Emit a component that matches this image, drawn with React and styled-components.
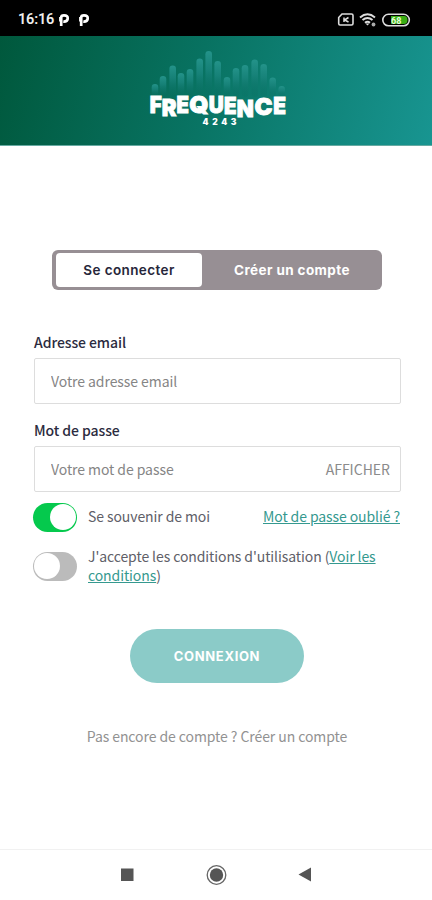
import { useState } from "react";
import styled, { createGlobalStyle } from "styled-components";

const BARS = [
    [155, 84], [163, 76], [172.7, 65.5], [181, 73], [190, 69],
    [199.7, 58.5], [208.7, 51], [217.7, 61], [227, 77], [236, 68],
    [245, 65], [254.7, 59.5], [263.7, 64], [272.7, 77.5], [281.7, 86],
];

// letter, left, baseline, width
const LETTERS = [
    ["F", 149.7, 113, 12], ["R", 161.7, 115.5, 14.7], ["E", 176.4, 112.5, 12.4],
    ["Q", 189.3, 112.5, 19.2], ["U", 208.7, 112.5, 15], ["E", 224, 113.5, 12.5],
    ["N", 236.8, 117.2, 17], ["C", 254.5, 114.5, 18], ["E", 273.3, 113.5, 12.7],
];

function Logo () {
    return (
        <svg width="144" height="80" viewBox="146 48 144 80" role="img" aria-label="Frequence 4243">
            <defs>
                <linearGradient id="bar" x1="0" y1="0" x2="0" y2="1">
                    <stop offset="0" stopColor="#24938a" />
                    <stop offset=".4" stopColor="#1a857d" stopOpacity=".8" />
                    <stop offset="1" stopColor="#066a5d" stopOpacity=".15" />
                </linearGradient>
            </defs>
            {BARS.map(([x, y]) => (
                <rect key={x} x={x - 3.3} y={y} width="6.6" height={97 - y} rx="3.3" fill="url(#bar)" />
            ))}
            <g fill="#fff" stroke="#fff" strokeWidth=".9" fontFamily="Inter, sans-serif" fontWeight="900" fontSize="23.5">
                {LETTERS.map(([letter, x, y, width]) => (
                    <text key={x} x={x} y={y} textLength={width} lengthAdjust="spacingAndGlyphs">{letter}</text>
                ))}
            </g>
            <text x="202.5" y="125" fill="#fff" fontFamily="Inter, sans-serif" fontWeight="900" fontSize="8.5" textLength="34">4243</text>
        </svg>
    )
}

function Parking () {
    return (
        <svg width="12" height="14" viewBox="0 0 12 14" fill="none" stroke="#fff">
            <path d="M3.2 13V4.500Q3.200 2.400 6 2.400C8.800 2.400 10 3.800 9.700 5.700C9.400 7.700 7.600 8.800 5.300 8.600" strokeWidth="2.7" />
            <path d="M1.700 8.500V4" strokeWidth="1.2" />
        </svg>
    )
}

function StatusIcons () {
    return (
        <svg width="74" height="16" viewBox="337 11.500 74 16" fill="none">
            <path d="M342 13.500H351.500Q353 13.500 353 15V23Q353 24.500 351.500 24.500H340Q338.700 24.500 338.700 23V17Z" stroke="#ddd" strokeWidth="1.6" />
            <path d="M344 17V21.500M348.500 17L344.500 19.500L348.500 21.500" stroke="#ddd" strokeWidth="1.5" />
            <path d="M360 16.900Q367.500 10.700 375 16.900M362.500 19.600Q367.500 15.400 372.500 19.600M365 22.200Q367.500 20.200 370 22.200" stroke="#ddd" strokeWidth="2" />
            <path d="M365.500 23L367.500 25L369.500 23Z" fill="#ddd" />
            <circle cx="373.500" cy="24" r="1.900" fill="#aaa" />
            <rect x="382.800" y="13.800" width="26.500" height="11.500" rx="5.700" stroke="#ddd" strokeWidth="1.600" />
            <path d="M391 15.500H404Q407.500 15.500 407.500 19.500T404 23.500H391Z" fill="#39ac13" />
            <text x="391" y="23" fill="#e4ffd9" fontFamily="Roboto, sans-serif" fontWeight="700" fontSize="9">68</text>
        </svg>
    )
}

export default function App () {
    const [remember, setRemember] = useState(true)
    const [accepted, setAccepted] = useState(false)
    const [visible, setVisible] = useState(false)

    return (
        <>
            <GlobalStyle />
            <Screen>
                <StatusBar>
                    <Clock>16:16</Clock>
                    <Notifications>
                        <Parking />
                        <Parking />
                    </Notifications>
                    <StatusIcons />
                </StatusBar>
                <Header>
                    <Logo />
                </Header>
                <Form onSubmit={(event) => event.preventDefault()}>
                    <Tabs>
                        <Tab type="button" $active>Se connecter</Tab>
                        <Tab type="button">Créer un compte</Tab>
                    </Tabs>
                    <Field>
                        <Label htmlFor="email">Adresse email</Label>
                        <InputBox>
                            <Input id="email" type="email" placeholder="Votre adresse email" />
                        </InputBox>
                    </Field>
                    <Field>
                        <Label htmlFor="password">Mot de passe</Label>
                        <InputBox>
                            <Input id="password" type={visible ? "text" : "password"} placeholder="Votre mot de passe" />
                            <ShowButton type="button" onClick={() => setVisible(!visible)}>AFFICHER</ShowButton>
                        </InputBox>
                    </Field>
                    <Option>
                        <Switch type="button" role="switch" aria-checked={remember} $on={remember} onClick={() => setRemember(!remember)}><Knob /></Switch>
                        <OptionText>Se souvenir de moi</OptionText>
                        <ForgotLink href="#">Mot de passe oublié ?</ForgotLink>
                    </Option>
                    <Option>
                        <Switch type="button" role="switch" aria-checked={accepted} $on={accepted} onClick={() => setAccepted(!accepted)}><Knob /></Switch>
                        <OptionText>J'accepte les conditions d'utilisation (<Link href="#">Voir les<br />conditions</Link>)</OptionText>
                    </Option>
                    <Submit type="submit">CONNEXION</Submit>
                    <Footer>Pas encore de compte ? Créer un compte</Footer>
                </Form>
                <NavBar>
                    <svg width="14" height="14"><rect x="1" y="0.500" width="12.500" height="12.500" fill="#555" /></svg>
                    <svg width="22" height="22">
                        <circle cx="11.500" cy="11" r="9.300" fill="none" stroke="#666" strokeWidth="1.300" />
                        <circle cx="11.500" cy="11" r="6.700" fill="#555" />
                    </svg>
                    <svg width="14" height="16"><path d="M0.500 7.500L13 0.500V14.500Z" fill="#555" /></svg>
                </NavBar>
            </Screen>
        </>
    )
}



// STYLING
const GlobalStyle = createGlobalStyle`
    * {
        box-sizing: border-box;
    }

    body {
        margin: 0;
        background-color: #fff;
        font-family: "Noto Sans CJK SC", "Noto Sans", sans-serif;
        font-size: 14px;
    }

    button, input {
        margin: 0;
        padding: 0;
        border: none;
        background: none;
        font: inherit;
    }
`;

const Screen = styled.div`
    display: flex;
    flex-direction: column;
    width: 432px;
    height: 900px;
    overflow: hidden;
`;

const StatusBar = styled.div`
    display: flex;
    align-items: center;
    flex: none;
    height: 36px;
    padding: 3px 21px 0 18px;
    background-color: #000;
`;

const Clock = styled.span`
    width: 36px;
    color: #eee;
    font-family: Roboto, sans-serif;
    font-size: 14.5px;
    font-weight: 600;
    letter-spacing: -.2px;
    line-height: 20px;
`;

const Notifications = styled.div`
    display: flex;
    flex: 1;
    gap: 8px;
    padding-left: 4px;
`;

const Header = styled.header`
    display: flex;
    justify-content: center;
    flex: none;
    height: 110px;
    padding: 12px 0 0 4px;
    background: linear-gradient(105deg, #00583c 0%, #087261 45%, #189591 100%);
    border-bottom: 1px solid #66aaa2;
`;

const Form = styled.form`
    display: flex;
    flex-direction: column;
    flex: 1;
    padding: 104px 31px 0 33px;
`;

const Tabs = styled.div`
    display: flex;
    width: 330px;
    height: 40px;
    margin: 0 0 42px 19px;
    padding: 3px 4px;
    border-radius: 6px;
    background-color: #978f94;
`;

const Tab = styled.button`
    flex: ${({ $active }) => $active ? "0 0 146px" : "1"};
    padding: 0 0 1px ${({ $active }) => $active ? "0" : "4px"};
    border-radius: 4px;
    background-color: ${({ $active }) => $active ? "#fff" : "transparent"};
    color: ${({ $active }) => $active ? "#26263a" : "#fff"};
    font-family: Inter, sans-serif;
    font-size: 13.5px;
    font-weight: ${({ $active }) => $active ? 600 : 700};
    letter-spacing: .4px;
    line-height: 16px;
`;

const Field = styled.div`
    display: flex;
    flex-direction: column;
    margin-bottom: 16px;

    & + & {
        margin-bottom: 0;
    }
`;

const Label = styled.label`
    height: 26px;
    padding-left: 1px;
    color: #2b2b40;
    font-weight: 500;
    letter-spacing: -.07px;
    line-height: 21px;
`;

const InputBox = styled.div`
    display: flex;
    align-items: center;
    height: 46px;
    margin-left: 1px;
    padding: 0 10px 0 16px;
    border: 1px solid #ddd;
    border-radius: 2px;
`;

const Input = styled.input`
    flex: 1;
    min-width: 0;
    outline: none;
    color: #555;
    letter-spacing: -.07px;

    &::placeholder {
        color: #858585;
        opacity: 1;
    }
`;

const ShowButton = styled.button`
    color: #8b8b8b;
`;

const Option = styled.div`
    display: flex;
    align-items: center;
    min-height: 30px;
    margin-top: 10px;

    & + & {
        margin-top: 15px;
    }
`;

const Switch = styled.button`
    display: flex;
    align-items: center;
    justify-content: ${({ $on }) => $on ? "flex-end" : "flex-start"};
    flex: none;
    width: 44px;
    height: 29px;
    padding: 0 1px;
    border-radius: 15px;
    background-color: ${({ $on }) => $on ? "#05c94d" : "#bbb"};
`;

const Knob = styled.span`
    width: 26px;
    height: 26px;
    border-radius: 50%;
    background-color: #fff;
`;

const OptionText = styled.span`
    flex: 1;
    padding: 0 0 1px 11px;
    color: #606068;
    letter-spacing: -.09px;
    line-height: 18.5px;
    white-space: nowrap;
`;

const Link = styled.a`
    color: #35998f;
    letter-spacing: -.09px;
    text-decoration: underline;
`;

const ForgotLink = styled(Link)`
    padding: 0 1px 2px 0;
    line-height: 18px;
`;

const Submit = styled.button`
    align-self: center;
    width: 174px;
    height: 54px;
    margin: 44px 0 42px;
    padding-bottom: 1px;
    border-radius: 27px;
    background-color: #8bcbc8;
    color: #fff;
    font-family: Inter, sans-serif;
    font-size: 13px;
    font-weight: 700;
    letter-spacing: .65px;
`;

const Footer = styled.p`
    margin: 0;
    color: #929292;
    letter-spacing: -.08px;
    line-height: 22px;
    text-align: center;
`;

const NavBar = styled.nav`
    display: flex;
    align-items: center;
    justify-content: space-between;
    flex: none;
    height: 51px;
    padding: 0 120px;
    border-top: 1px solid #f1f1f1;
`;
